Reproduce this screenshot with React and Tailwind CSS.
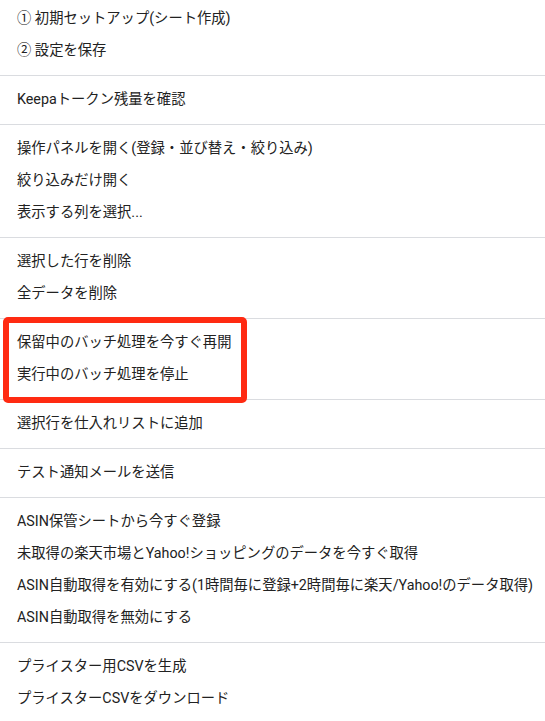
import React from 'react';

const sections = [
  ['① 初期セットアップ(シート作成)', '② 設定を保存'],
  ['Keepaトークン残量を確認'],
  ['操作パネルを開く(登録・並び替え・絞り込み)', '絞り込みだけ開く', '表示する列を選択...'],
  ['選択した行を削除', '全データを削除'],
  ['保留中のバッチ処理を今すぐ再開', '実行中のバッチ処理を停止'],
  ['選択行を仕入れリストに追加'],
  ['テスト通知メールを送信'],
  [
    'ASIN保管シートから今すぐ登録',
    '未取得の楽天市場とYahoo!ショッピングのデータを今すぐ取得',
    'ASIN自動取得を有効にする(1時間毎に登録+2時間毎に楽天/Yahoo!のデータ取得)',
    'ASIN自動取得を無効にする',
  ],
  ['プライスター用CSVを生成', 'プライスターCSVをダウンロード'],
];

// index of the section that is boxed in red
const HIGHLIGHT = 4;

const MenuItem = ({ label }) => (
  <div className="h-8 flex items-center pl-[17px] pr-2 text-[14.3px] text-[#222] whitespace-nowrap">
    {label}
  </div>
);

const App = () => {
  return (
    <div
      className="w-[545px] h-[721px] bg-white overflow-hidden pt-[3px]"
      style={{ fontFamily: 'Roboto, "Noto Sans CJK JP", sans-serif' }}
    >
      {sections.map((items, idx) => (
        <div key={idx}>
          {idx > 0 && <div className="h-px bg-[#dadce0] my-2" />}
          <div className="relative">
            {items.map((label) => (
              <MenuItem key={label} label={label} />
            ))}
            {idx === HIGHLIGHT && (
              <div className="absolute -top-[10px] -bottom-[12px] left-[3px] w-[244px] border-[6px] border-[#ff2a12] rounded-[5px] z-10" />
            )}
          </div>
        </div>
      ))}
    </div>
  );
};

export default App;
